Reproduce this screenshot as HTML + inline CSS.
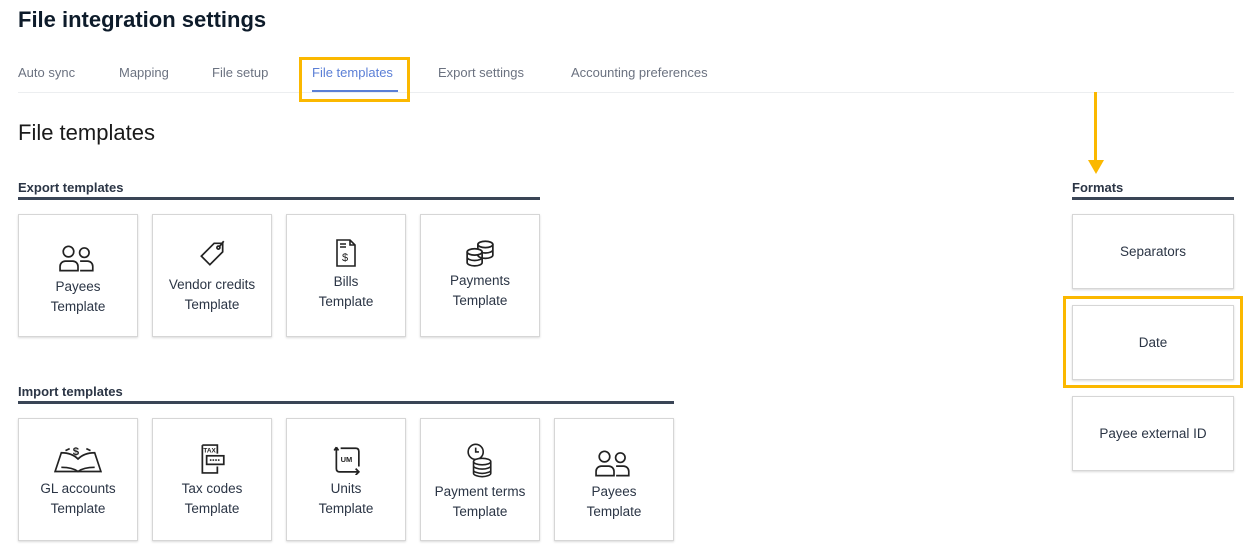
<!DOCTYPE html><html><head><style>
body{margin:0;width:1251px;height:558px;background:#fff;font-family:"Liberation Sans",sans-serif;position:relative;overflow:hidden;color:#1f2a37}
.a{position:absolute}
h1{position:absolute;left:18px;top:7px;margin:0;font-size:22px;font-weight:bold;color:#0d1b2a}
.tab{position:absolute;top:65px;font-size:13px;color:#6b7280}
.card{position:absolute;width:118px;height:121px;border:1px solid #d6d6d6;box-shadow:0 1px 2px rgba(0,0,0,.15);background:#fff;text-align:center;font-size:13.5px;color:#2b3545;line-height:20px}
.card svg{display:block;margin:0 auto 4px}
.sec{position:absolute;font-size:13px;font-weight:bold;color:#2b3545}
.ln{position:absolute;height:3px;background:#3a4556}
.fc{position:absolute;left:1072px;width:160px;height:73px;border:1px solid #d6d6d6;box-shadow:0 1px 2px rgba(0,0,0,.15);display:flex;align-items:center;justify-content:center;font-size:13.5px;color:#2b3545}
</style></head><body>
<h1>File integration settings</h1>
<div class="tab" style="left:18px">Auto sync</div>
<div class="tab" style="left:119px">Mapping</div>
<div class="tab" style="left:212px">File setup</div>
<div class="tab" style="left:312px;color:#5b7fd6">File templates</div>
<div class="tab" style="left:438px">Export settings</div>
<div class="tab" style="left:571px">Accounting preferences</div>
<div class="a" style="left:18px;top:92px;width:1216px;height:1px;background:#eceef0"></div>
<div class="a" style="left:312px;top:90px;width:86px;height:2px;background:#5b7fd6"></div>
<div class="a" style="left:299px;top:57px;width:111px;height:45px;border:3px solid #fbb800;box-sizing:border-box"></div>
<div class="a" style="left:18px;top:120px;font-size:22px;color:#1a1a1a">File templates</div>
<div class="sec" style="left:18px;top:180px">Export templates</div>
<div class="ln" style="left:18px;top:197px;width:522px"></div>
<div class="card" style="left:18px;top:214px"><div style="height:30px"></div><svg width="38" height="28" viewBox="0 0 36 26" fill="none" stroke="#222" stroke-width="1.6"><circle cx="9" cy="6" r="5"/><circle cx="24" cy="7" r="4.5"/><path d="M1 24v-4a5 5 0 0 1 5-5h7a5 5 0 0 1 5 5v4z"/><path d="M20 15h7a5 5 0 0 1 5 5v4h-12"/></svg>Payees<br>Template</div>
<div class="card" style="left:152px;top:214px"><div style="height:22px"></div><svg width="32" height="34" viewBox="0 0 30 30" fill="none" stroke="#222" stroke-width="1.6"><path d="M17 5l8 0 0 8-12 12-8-8z"/><circle cx="21" cy="9" r="1.4"/><path d="M22 8l4-5"/></svg>Vendor credits<br>Template</div>
<div class="card" style="left:286px;top:214px"><div style="height:23px"></div><svg width="22" height="30" viewBox="0 0 22 28" fill="none" stroke="#222" stroke-width="1.6"><path d="M2 1h13l5 5v21H2z"/><path d="M5 5h6M5 8h6M15 1v5h5"/><text x="7" y="22" font-size="11" fill="#222" stroke="none" font-family="Liberation Sans">$</text></svg>Bills<br>Template</div>
<div class="card" style="left:420px;top:214px"><div style="height:24px"></div><svg width="30" height="28" viewBox="0 0 28 26" fill="none" stroke="#222" stroke-width="1.6"><ellipse cx="19" cy="5" rx="7" ry="3"/><path d="M12 5v10c0 1.5 3 3 7 3s7-1.5 7-3V5M12 10c0 1.5 3 3 7 3s7-1.5 7-3"/><ellipse cx="9" cy="12" rx="7" ry="3" fill="#fff"/><path d="M2 12v10c0 1.5 3 3 7 3s7-1.5 7-3V12M2 17c0 1.5 3 3 7 3s7-1.5 7-3"/></svg>Payments<br>Template</div>
<div class="sec" style="left:18px;top:384px">Import templates</div>
<div class="ln" style="left:18px;top:401px;width:656px"></div>
<div class="card" style="left:18px;top:418px"><div style="height:24px"></div><svg width="50" height="32" viewBox="0 0 48 28" fill="none" stroke="#222" stroke-width="1.6"><path d="M2 26l6-18c6 0 12 2 16 6 4-4 10-6 16-6l6 18z"/><path d="M8 22c6 0 12 1 16 4 4-3 10-4 16-4"/><path d="M12 6l4-2M36 6l-4-2"/><text x="19" y="10" font-size="11" font-weight="bold" fill="#222" stroke="none" font-family="Liberation Sans">$</text></svg>GL accounts<br>Template</div>
<div class="card" style="left:152px;top:418px"><div style="height:24px"></div><svg width="30" height="32" viewBox="0 0 28 28" fill="none" stroke="#222" stroke-width="1.6"><path d="M5 1h14v8M5 1v26h14v-6"/><rect x="9" y="11" width="16" height="8"/><path d="M12 15h10" stroke-dasharray="1.5 1"/><text x="6" y="8" font-size="6" font-weight="bold" fill="#222" stroke="none" font-family="Liberation Sans">TAX</text></svg>Tax codes<br>Template</div>
<div class="card" style="left:286px;top:418px"><div style="height:24px"></div><svg width="30" height="32" viewBox="0 0 28 28" fill="none" stroke="#222" stroke-width="1.6"><path d="M5 3v20q0 3 3 3h18M23 23l3 3-3 3"/><path d="M5 3l-2 3M5 3l2 3"/><path d="M9 4h14q3 0 3 3v14"/><text x="9" y="17" font-size="7" font-weight="bold" fill="#222" stroke="none" font-family="Liberation Sans">UM</text></svg>Units<br>Template</div>
<div class="card" style="left:420px;top:418px"><div style="height:24px"></div><svg width="28" height="35" viewBox="0 0 26 32" fill="none" stroke="#222" stroke-width="1.5"><circle cx="9" cy="8" r="7"/><path d="M9 4v4h3"/><ellipse cx="15" cy="17" rx="8" ry="3" fill="#fff"/><path d="M7 17v11c0 1.5 4 3 8 3s8-1.5 8-3V17M7 21c0 1.5 4 3 8 3s8-1.5 8-3M7 25c0 1.5 4 3 8 3s8-1.5 8-3"/></svg>Payment terms<br>Template</div>
<div class="card" style="left:554px;top:418px"><div style="height:31px"></div><svg width="38" height="28" viewBox="0 0 36 26" fill="none" stroke="#222" stroke-width="1.6"><circle cx="9" cy="6" r="5"/><circle cx="24" cy="7" r="4.5"/><path d="M1 24v-4a5 5 0 0 1 5-5h7a5 5 0 0 1 5 5v4z"/><path d="M20 15h7a5 5 0 0 1 5 5v4h-12"/></svg>Payees<br>Template</div>
<div class="a" style="left:1094px;top:92px;width:3px;height:70px;background:#fbb800"></div>
<div class="a" style="left:1088px;top:160px;width:0;height:0;border-left:8px solid transparent;border-right:8px solid transparent;border-top:14px solid #fbb800"></div>
<div class="sec" style="left:1072px;top:180px">Formats</div>
<div class="ln" style="left:1072px;top:197px;width:162px"></div>
<div class="fc" style="top:214px">Separators</div>
<div class="fc" style="top:305px">Date</div>
<div class="fc" style="top:396px">Payee external ID</div>
<div class="a" style="left:1063px;top:296px;width:180px;height:92px;border:3px solid #fbb800;box-sizing:border-box"></div>
</body></html>
